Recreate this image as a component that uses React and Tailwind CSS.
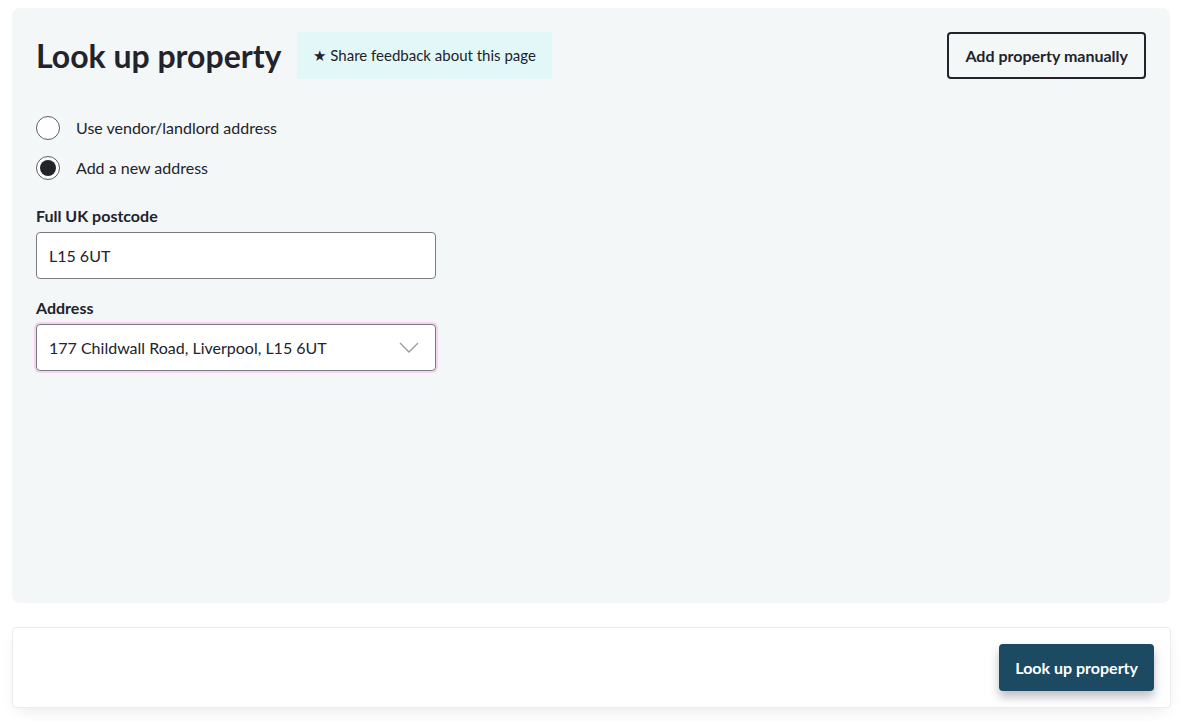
export default function App() {
  return (
    <main className="min-h-screen bg-white px-3 pt-2 font-['Lato','Noto_Sans',sans-serif] text-[#22232b]">
      {/* Main panel */}
      <section className="h-[595px] w-[1158px] rounded-lg bg-[#f3f7f8] px-6 pt-6">
        <div className="flex items-start justify-between">
          <div className="flex items-center gap-4">
            <h1 className="text-[32px] font-bold leading-[47px]">Look up property</h1>
            <span className="flex h-[47px] items-center bg-[#e2f7f7] px-4 text-[15px]">
              ★ Share feedback about this page
            </span>
          </div>
          <button className="h-[47px] rounded border-2 border-[#22232b] px-4 text-[16px] font-bold">
            Add property manually
          </button>
        </div>

        <div className="mt-[37px] flex flex-col gap-4">
          <label className="flex items-center gap-[16px] text-[16px]">
            <span className="h-6 w-6 rounded-full border border-[#5d5e66] bg-white" />
            Use vendor/landlord address
          </label>
          <label className="flex items-center gap-[16px] text-[16px]">
            <span className="flex h-6 w-6 items-center justify-center rounded-full border border-[#5d5e66] bg-white">
              <span className="h-4 w-4 rounded-full bg-[#22232b]" />
            </span>
            Add a new address
          </label>
        </div>

        <div className="mt-[24px] w-[400px]">
          <label className="block text-[16px] font-bold leading-6">Full UK postcode</label>
          <div className="mt-1 flex h-[47px] items-center rounded border border-[#7a7b82] bg-white px-3 text-[16px]">
            L15 6UT
          </div>
          <label className="mt-[17px] block text-[16px] font-bold leading-6">Address</label>
          <div className="mt-1 flex h-[47px] items-center justify-between rounded border border-[#7a7b82] bg-white pl-3 pr-4 text-[16px] shadow-[0_0_0_2px_#f6d3ef]">
            177 Childwall Road, Liverpool, L15 6UT
            <svg width="20" height="12" viewBox="0 0 20 12" fill="none">
              <path d="M1 1l9 9 9-9" stroke="#9a9ba2" strokeWidth="1.3" />
            </svg>
          </div>
        </div>
      </section>

      {/* Footer actions */}
      <section className="mt-6 flex h-[81px] w-[1159px] items-center justify-end rounded border border-[#ececee] bg-white pr-4 shadow-[0_6px_16px_-6px_rgba(0,0,0,0.12)]">
        <button className="h-[47px] rounded bg-[#1c4a62] px-4 text-[16px] font-bold text-white shadow-[0_6px_10px_rgba(40,40,70,0.3)]">
          Look up property
        </button>
      </section>
    </main>
  );
}
